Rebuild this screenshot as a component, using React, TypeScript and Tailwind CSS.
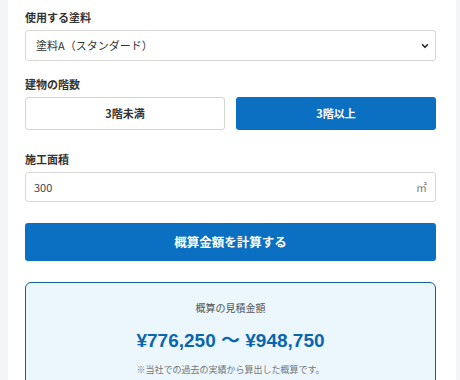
import React from "react";

export default function App() {
  const font = { fontFamily: '"Noto Sans CJK JP", "Noto Sans", sans-serif' };
  return (
    <div className="min-h-[380px] w-[460px] bg-[#f3f5f9] overflow-hidden" style={font}>
      <div className="ml-[8px] w-[448px] h-[380px] bg-white pl-[17px] pt-[9px]">
        <div className="w-[411px]">
          <div className="text-[11px] leading-[16px] font-bold text-[#333]">使用する塗料</div>
          <div className="mt-[5px] h-[31px] rounded-[3px] border border-[#d8d8d8] bg-white flex items-center justify-between pl-[10px] pr-[5px]">
            <span className="text-[11px] text-[#333]">塗料A（スタンダード）</span>
            <svg width="10" height="10" viewBox="0 0 10 10">
              <path d="M2.5 3.8 L5 6.3 L7.5 3.8" fill="none" stroke="#222" strokeWidth="1.6" strokeLinecap="round" strokeLinejoin="round" />
            </svg>
          </div>

          <div className="mt-[15px] text-[11px] leading-[16px] font-bold text-[#333]">建物の階数</div>
          <div className="mt-[5px] grid grid-cols-2 gap-[11px]">
            <div className="h-[33px] rounded-[3px] border border-[#d4d4d4] bg-white flex items-center justify-center text-[11px] font-bold text-[#333]">3階未満</div>
            <div className="h-[33px] rounded-[3px] bg-[#0b70c2] flex items-center justify-center text-[11px] font-bold text-white">3階以上</div>
          </div>

          <div className="mt-[21px] text-[11px] leading-[16px] font-bold text-[#333]">施工面積</div>
          <div className="mt-[5px] h-[30px] rounded-[3px] border border-[#d8d8d8] bg-white flex items-center justify-between pl-[8px] pr-[8px]">
            <span className="text-[11px] text-[#444]">300</span>
            <span className="text-[11px] text-[#777]">㎡</span>
          </div>

          <div className="mt-[21px] h-[38px] rounded-[3px] bg-[#0b70c2] flex items-center justify-center text-[12.5px] font-bold text-white">概算金額を計算する</div>

          <div className="mt-[21px] h-[120px] rounded-[6px] border-[1.5px] border-[#155f96] bg-[#ebf6fd] flex flex-col items-center pt-[17px]">
            <div className="text-[10px] leading-[16px] text-[#555]">概算の見積金額</div>
            <div
              className="mt-[13px] text-[19px] leading-[24px] font-bold text-[#0966ad]"
              style={{ fontFamily: '"Liberation Sans", "Noto Sans CJK JP", sans-serif' }}
            >
              ¥776,250 〜 ¥948,750
            </div>
            <div className="mt-[10px] text-[9px] leading-[14px] text-[#777]">※当社での過去の実績から算出した概算です。</div>
          </div>
        </div>
      </div>
    </div>
  );
}
